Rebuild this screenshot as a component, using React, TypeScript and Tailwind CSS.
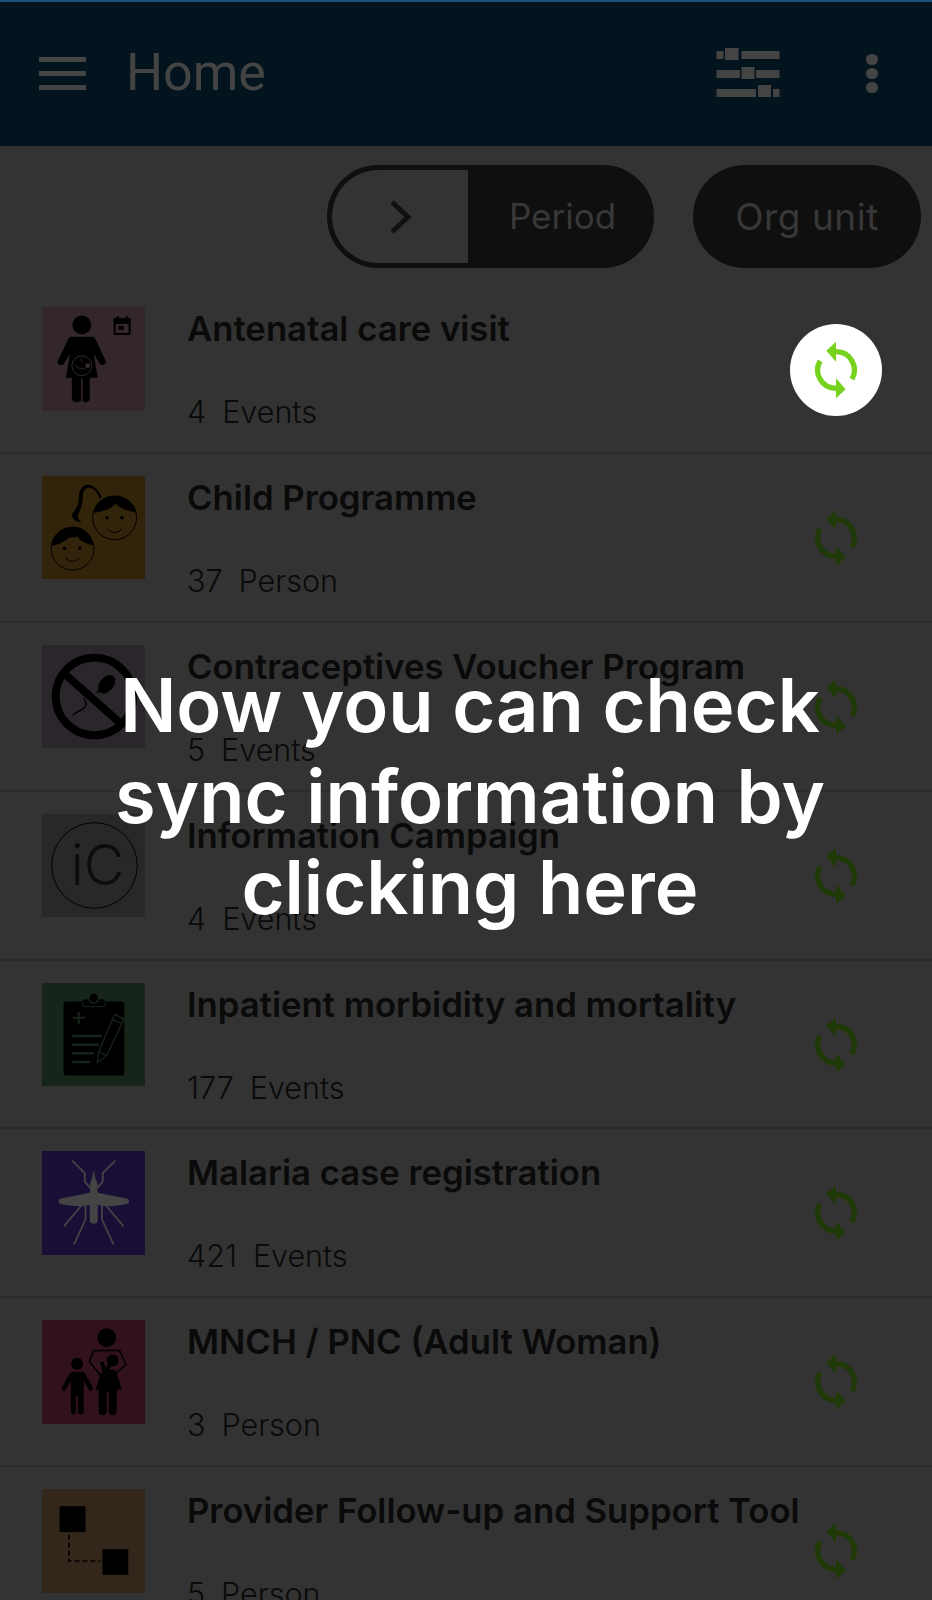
import React from 'react';

const Sync = ({ color }: { color: string }) => (
  <svg width="60" height="60" viewBox="0 0 60 60" fill="none">
    <path d="M30 11.7A18.3 18.3 0 0 1 45.9 39.2" stroke={color} strokeWidth="5.3" />
    <path d="M30 48.3A18.3 18.3 0 0 1 14.1 20.8" stroke={color} strokeWidth="5.3" />
    <path d="M20.3 10.7L30 1.7V21.7Z" fill={color} />
    <path d="M39.7 49.3L30 38.3V58.3Z" fill={color} />
  </svg>
);

const Thumb = ({ bg, children }: { bg: string; children: React.ReactNode }) => (
  <svg width="103.5" height="103.5" viewBox="0 0 104 104" className="shrink-0" style={{ background: bg }}>
    {children}
  </svg>
);

const Antenatal = () => (
  <Thumb bg="#33272a">
    <circle cx="40" cy="18" r="9.5" fill="#000" />
    <path d="M30 30H50C52 30 53 31 54 33L64 54C65 58 60 60 58 57L52 47L56 71H48V92C48 97 40 97 40 92C40 97 30 97 30 92V71H24L28 47L22 57C19 60 15 58 16 54L26 33C27 31 28 30 30 30Z" fill="#000" />
    <circle cx="40" cy="59" r="10" fill="#000" stroke="#33272a" strokeWidth="1" />
    <path d="M33 58C36 62 42 64 45 60M39 51C42 52 37 54 41 55" stroke="#33272a" strokeWidth="1" fill="none" />
    <circle cx="46" cy="59" r="2.5" fill="#33272a" />
    <path d="M40 72V95" stroke="#33272a" strokeWidth="1.5" />
    <rect x="73" y="12" width="15" height="15" fill="none" stroke="#000" strokeWidth="2" />
    <path d="M72 15H89" stroke="#000" strokeWidth="4" />
    <path d="M76 9V12M85 9V12" stroke="#000" strokeWidth="2" />
    <rect x="77" y="19" width="5" height="4" fill="#000" />
  </Thumb>
);

const Child = () => (
  <Thumb bg="#32240a">
    <circle cx="73" cy="42" r="22" fill="none" stroke="#000" strokeWidth="1" />
    <circle cx="30.7" cy="73" r="21.5" fill="none" stroke="#000" strokeWidth="1" />
    <path d="M52 37C53 26 63 20 73 20C84 20 93 27 95 37C88 35 78 33 74 28C70 33 60 36 52 37Z" fill="#000" />
    <path d="M9.5 70C11 59 20 51 31 51C42 51 50 59 52 70C46 68 38 66 35 60C34 64 30 60 26 63C22 66 15 70 9.5 70Z" fill="#000" />
    <path d="M60 21C56 13 50 8 45 9C39 10 37 16 37 23C37 30 33 34 30.5 38C29 43 35 47 40 46C36 44 35 41 37 37C40 32 41 26 41 20C41 14 45 11 49 12C53 13 56 17 58 23Z" fill="#000" />
    <circle cx="65.3" cy="42" r="1.8" fill="#000" />
    <circle cx="80.3" cy="42" r="1.8" fill="#000" />
    <path d="M66 53C69 58 77 58 80 53" fill="none" stroke="#000" strokeWidth="1" />
    <circle cx="22.7" cy="72.7" r="1.8" fill="#000" />
    <circle cx="38" cy="72.7" r="1.8" fill="#000" />
    <path d="M23.7 82C27 87 34 87 37.7 82" fill="none" stroke="#000" strokeWidth="1" />
  </Thumb>
);

const Contraceptive = () => (
  <Thumb bg="#2b252c">
    <circle cx="52.7" cy="51.7" r="39" fill="none" stroke="#000" strokeWidth="8" />
    <path d="M24 30L78 78" stroke="#000" strokeWidth="8" />
    <ellipse cx="65" cy="39.5" rx="7" ry="10.5" transform="rotate(40 65 39.5)" fill="#000" />
    <path d="M60 44L55 48" stroke="#000" strokeWidth="2" />
    <path d="M42 53C46 59 44 63 40 65C36 67 33 68 31 71" fill="none" stroke="#000" strokeWidth="1.5" />
  </Thumb>
);

const InfoCampaign = () => (
  <Thumb bg="#282828">
    <circle cx="52.7" cy="51.7" r="43" fill="none" stroke="#000" strokeWidth="1" />
    <text x="29" y="71" fontSize="56" fontWeight="300" fill="#0c0c0c" fontFamily="Inter, sans-serif">iC</text>
  </Thumb>
);

const Inpatient = () => (
  <Thumb bg="#16241a">
    <rect x="21.7" y="18.7" width="61" height="74.3" rx="3" fill="#000" />
    <rect x="41" y="16" width="22.5" height="7.7" rx="1" fill="#000" stroke="#16241a" strokeWidth="1" />
    <circle cx="52" cy="15" r="5" fill="#000" stroke="#16241a" strokeWidth="1.5" />
    <path d="M37 29V41M31 35H43" stroke="#16241a" strokeWidth="2" />
    <path d="M30.3 53.3H60.3M30.3 62H57M30.3 70.7H52M30.3 79.3H48" stroke="#16241a" strokeWidth="2.5" />
    <path d="M55.5 80L57 69L73 31.5L82.5 36L65 73Z" fill="#000" stroke="#16241a" strokeWidth="1.3" />
    <path d="M57 69L65 73M71 37L81 41" stroke="#16241a" strokeWidth="1.2" />
  </Thumb>
);

const Malaria = () => (
  <Thumb bg="#180e36">
    <path d="M30.3 9.7L43 22.3V30.7L49 37.5M73.7 9.7L61 22.3V30.7L55 37.5" fill="none" stroke="#444" strokeWidth="1.8" />
    <path d="M42 52L22 75.7M62 52L82 75.7M43.7 52V69L32 94M60.3 52V69L72 94" fill="none" stroke="#444" strokeWidth="1.8" />
    <path d="M52 19L54 29C56 31 56 34 55.5 38L56 42L86 48C88 50 88 52 86 53C75 56 62 56 56 54V70C56 74 48 74 48 70V54C42 56 29 56 18 53C16 52 16 50 18 48L48 42L48.5 38C48 34 48 31 50 29Z" fill="#444" />
  </Thumb>
);

const Mnch = () => (
  <Thumb bg="#30111c">
    <circle cx="65" cy="17.7" r="9.5" fill="#000" />
    <circle cx="35.3" cy="44" r="6" fill="#000" />
    <path d="M31 52H40C42 52 43 53 44 55L51 68C52 71 49 72 47 70L42 61V92C42 96 36 96 36 92V76H34V92C34 96 29 96 29 92V61L24 70C22 72 19 71 20 68L27 55C28 53 29 52 31 52Z" fill="#000" />
    <path d="M60 50L74 50L80.3 70H75V92C75 97 67 97 67 92V72H65V92C65 97 57 97 57 92V70H53.7Z" fill="#000" />
    <path d="M52 30.7H78L84.3 45L72 55.5H58.7L47.7 41.7Z" fill="none" stroke="#000" strokeWidth="1.5" />
    <path d="M52 32.5H77L82 44.5L71.5 53.5H59.5L50 41.5Z" fill="#30111c" />
    <circle cx="71" cy="40.7" r="6" fill="#000" />
    <path d="M60 42L63 52L68 46" fill="none" stroke="#000" strokeWidth="4" />
    <path d="M62 50H74L72 54H60Z" fill="#000" />
  </Thumb>
);

const Provider = () => (
  <Thumb bg="#32271a">
    <rect x="17.7" y="17.3" width="26" height="26" fill="#000" />
    <rect x="60.7" y="60.3" width="26" height="26" fill="#000" />
    <path d="M27 46V72.3H58.7" fill="none" stroke="#000" strokeWidth="1.6" strokeDasharray="5 3" />
  </Thumb>
);

const rows = [
  { title: 'Antenatal care visit', count: '4', unit: 'Events', icon: <Antenatal /> },
  { title: 'Child Programme', count: '37', unit: 'Person', icon: <Child /> },
  { title: 'Contraceptives Voucher Program', count: '5', unit: 'Events', icon: <Contraceptive /> },
  { title: 'Information Campaign', count: '4', unit: 'Events', icon: <InfoCampaign /> },
  { title: 'Inpatient morbidity and mortality', count: '177', unit: 'Events', icon: <Inpatient /> },
  { title: 'Malaria case registration', count: '421', unit: 'Events', icon: <Malaria /> },
  { title: 'MNCH / PNC (Adult Woman)', count: '3', unit: 'Person', icon: <Mnch /> },
  { title: 'Provider Follow-up and Support Tool', count: '5', unit: 'Person', icon: <Provider /> },
];

const App: React.FC = () => {
  return (
    <div className="relative h-[1600px] w-[932px] overflow-hidden bg-[#333333] font-[family-name:Inter]">
      <header className="flex h-[146px] items-center border-t-2 border-[#1a4f80] bg-[#04141e] pb-[2px] shadow-sm">
        <div className="ml-[39px] flex w-[47px] flex-col gap-[9px]">
          <div className="h-[5px] bg-[#444444]"></div>
          <div className="h-[5px] bg-[#444444]"></div>
          <div className="h-[5px] bg-[#444444]"></div>
        </div>
        <h1 className="ml-[40px] font-[family-name:Roboto] text-[52px] text-[#444444]">Home</h1>
        <svg className="ml-auto" width="64" height="50" viewBox="716 48 64 50" fill="#444444">
          <rect x="716.5" y="51" width="7" height="8" />
          <rect x="725" y="48" width="13.5" height="12" />
          <rect x="741.5" y="51" width="38" height="8" />
          <rect x="716.5" y="70" width="23.5" height="8" />
          <rect x="741.5" y="67" width="13" height="12" />
          <rect x="756" y="70" width="23.5" height="8" />
          <rect x="716.5" y="89" width="39.5" height="8" />
          <rect x="758" y="85" width="13" height="12" />
          <rect x="773" y="89" width="6.5" height="8" />
        </svg>
        <div className="ml-[86px] mr-[54px] flex flex-col gap-[3px]">
          <div className="h-[11px] w-[12px] rounded-full bg-[#444444]"></div>
          <div className="h-[11px] w-[12px] rounded-full bg-[#444444]"></div>
          <div className="h-[11px] w-[12px] rounded-full bg-[#444444]"></div>
        </div>
      </header>

      <div className="flex h-[139px] justify-end gap-[39px] pr-[11px] pt-[19px]">
        <div className="flex h-[103px] w-[327px] overflow-hidden rounded-full border-[5px] border-[#0f0f0f] bg-[#0f0f0f]">
          <div className="flex w-[136px] items-center justify-center bg-[#333333]">
            <svg width="22" height="34" viewBox="0 0 22 34" fill="none">
              <path d="M3 2L19 17L3 32" stroke="#101010" strokeWidth="5" />
            </svg>
          </div>
          <div className="flex flex-1 items-center justify-center pl-[8px] text-[35px] text-[#383838]">Period</div>
        </div>
        <div className="flex h-[103px] w-[228px] items-center justify-center rounded-full bg-[#0f0f0f] text-[37px] tracking-[0.5px] text-[#383838]">
          Org unit
        </div>
      </div>

      {rows.map((row) => (
        <div key={row.title} className="flex h-[168.9px] items-start border-b-2 border-[#2b2b2b] pl-[41.5px] pt-[22px]">
          {row.icon}
          <div className="ml-[42px] -mt-[1px] flex h-[125px] flex-1 flex-col justify-between text-[#0a0a0a]">
            <div className="whitespace-nowrap text-[34.7px] font-semibold leading-[44px]">{row.title}</div>
            <div className="flex gap-[16px] text-[30.5px] font-light leading-[38px]">
              <span>{row.count}</span>
              <span>{row.unit}</span>
            </div>
          </div>
          <div className="mr-[66px] mt-[32px] shrink-0">
            <Sync color="#1f3a06" />
          </div>
        </div>
      ))}

      <div className="absolute left-[790px] top-[324px] flex h-[92px] w-[92px] items-center justify-center rounded-full bg-white">
        <Sync color="#76d21c" />
      </div>

      <div className="absolute inset-x-0 top-[660px] pl-[8px] text-center text-[74px] font-semibold leading-[91px] text-white">
        Now you can check
        <br />
        sync information by
        <br />
        clicking here
      </div>
    </div>
  );
};

export default App;
